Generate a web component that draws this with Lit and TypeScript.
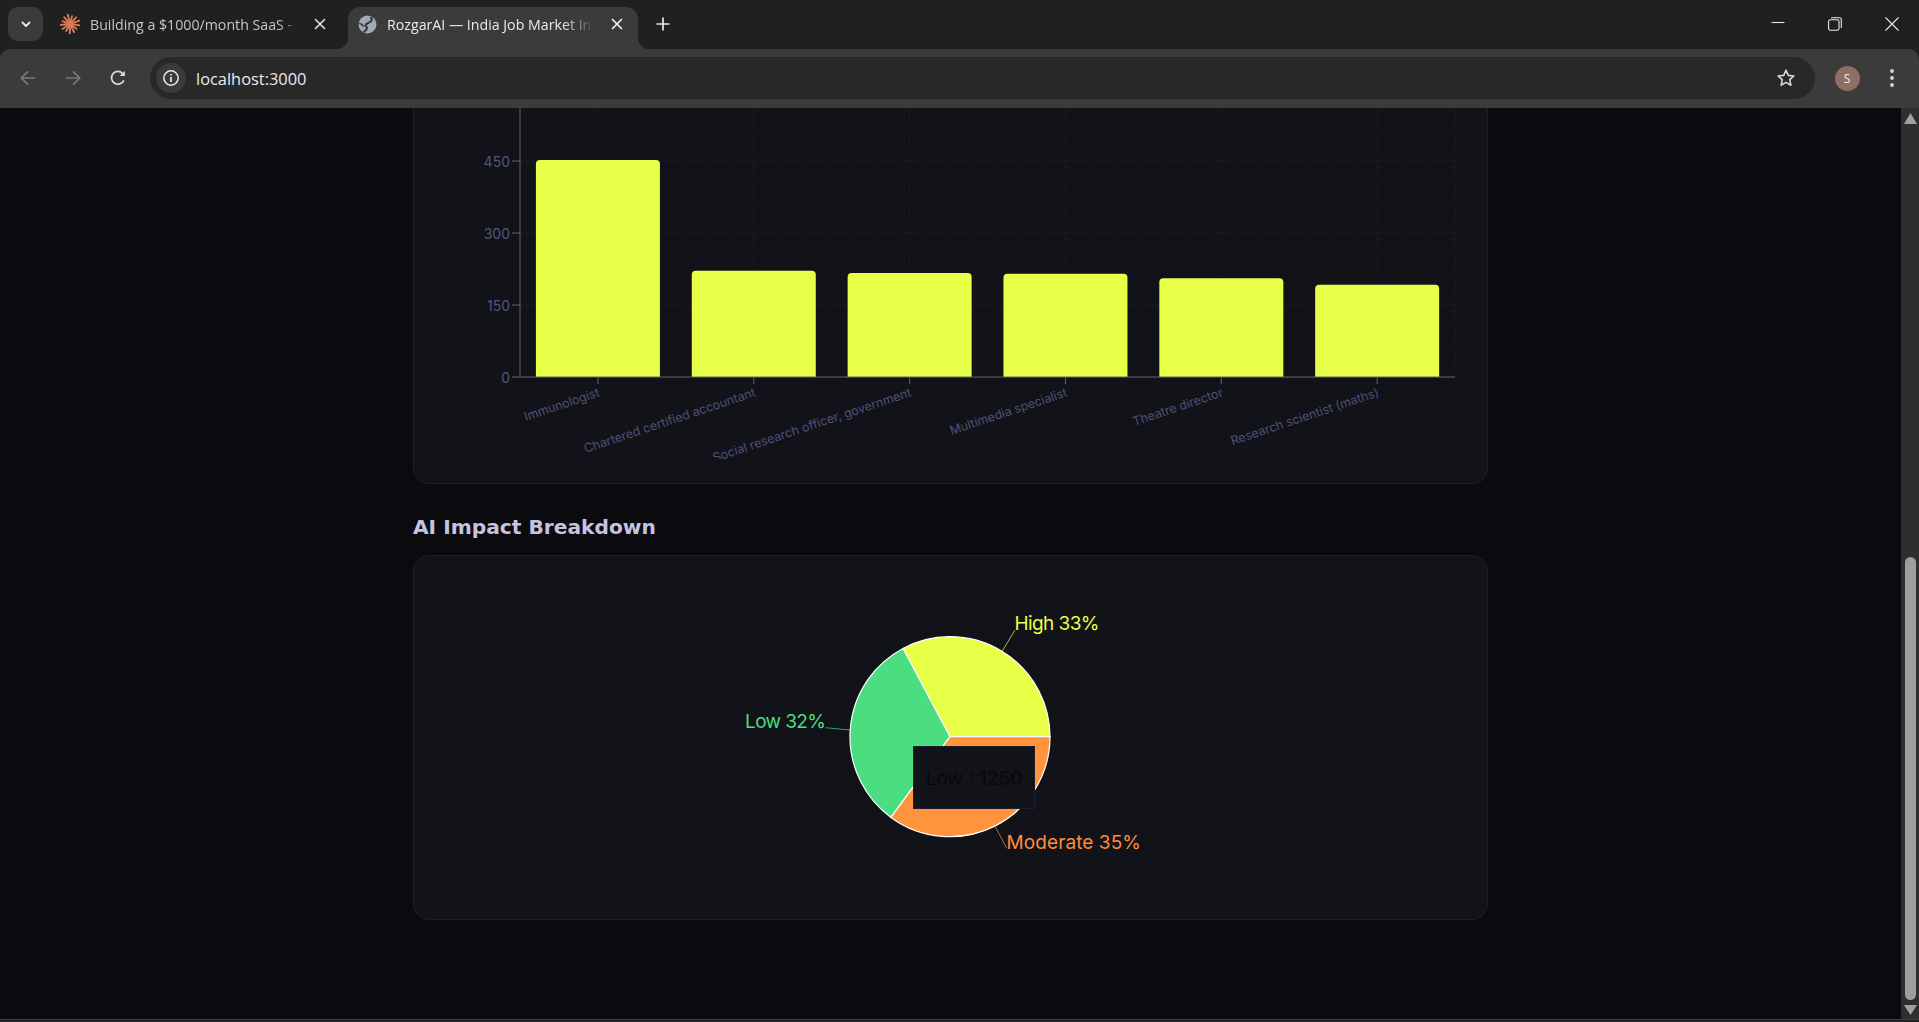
import { LitElement, html, css, svg } from 'lit';
import { customElement } from 'lit/decorators.js';

const YELLOW = '#e8ff47';
const GREEN = '#4ade80';
const ORANGE = '#ff943d';

const jobs = [
  { name: 'Immunologist', top: 160 },
  { name: 'Chartered certified accountant', top: 270.7 },
  { name: 'Social research officer, government', top: 273 },
  { name: 'Multimedia specialist', top: 273.7 },
  { name: 'Theatre director', top: 278.3 },
  { name: 'Research scientist (maths)', top: 284.7 },
];

const BASE_Y = 377;
const AXIS_X = 520;
const PITCH = 155.85;
const BAR_W = 124;

const yTicks = [
  { label: '450', y: 161 },
  { label: '300', y: 233 },
  { label: '150', y: 305 },
  { label: '0', y: BASE_Y },
];

const CX = 950;
const CY = 736.7;
const R = 100;

function slice(from: number, to: number) {
  const a = (from * Math.PI) / 180;
  const b = (to * Math.PI) / 180;
  const large = to - from > 180 ? 1 : 0;
  return `M${CX} ${CY} L${CX + R * Math.cos(a)} ${CY - R * Math.sin(a)} A${R} ${R} 0 ${large} 0 ${CX + R * Math.cos(b)} ${CY - R * Math.sin(b)} Z`;
}

const slices = [
  { from: 0, to: 118, color: YELLOW },
  { from: 118, to: 233.8, color: GREEN },
  { from: 233.8, to: 360, color: ORANGE },
];

const pieLabels = [
  { text: 'High 33%', x: 1014.5, y: 630, w: 85, anchor: 'start', color: YELLOW, line: '1002.3,651 1015,630' },
  { text: 'Low 32%', x: 826, y: 727.7, w: 81, anchor: 'end', color: GREEN, line: '850,730 825.3,727.7' },
  { text: 'Moderate 35%', x: 1006.5, y: 848.7, w: 134.5, anchor: 'start', color: '#ff8c3a', line: '995.3,826.7 1006.7,848.3' },
];

@customElement('browser-bar')
export class BrowserBar extends LitElement {
  static styles = css`
    :host {
      display: block;
      font-family: 'Open Sans', 'Liberation Sans', sans-serif;
      background: #1f2120;
    }
    .strip {
      height: 49px;
      display: flex;
      align-items: flex-end;
      position: relative;
    }
    .menu {
      width: 35px;
      height: 34px;
      margin: 0 0 8px 8px;
      border-radius: 10px;
      background: #3b3b3b;
      display: flex;
      align-items: center;
      justify-content: center;
    }
    .tab {
      height: 42px;
      display: flex;
      align-items: center;
      font-size: 14.2px;
      position: relative;
      box-sizing: border-box;
      padding-bottom: 8px;
    }
    .tab.idle {
      width: 288px;
      margin-left: 5px;
      padding-left: 12px;
      color: #c4c7c5;
      margin-right: 12px;
    }
    .tab.on {
      width: 290px;
      padding-left: 10px;
      color: #e8eaed;
      background: #3b3b3b;
      border-radius: 12px 12px 0 0;
    }
    .tab.on::before,
    .tab.on::after {
      content: '';
      position: absolute;
      bottom: 0;
      width: 12px;
      height: 12px;
    }
    .tab.on::before {
      left: -12px;
      background: radial-gradient(circle at 0 0, transparent 12px, #3b3b3b 12.5px);
    }
    .tab.on::after {
      right: -12px;
      background: radial-gradient(circle at 100% 0, transparent 12px, #3b3b3b 12.5px);
    }
    .title {
      margin-left: 10px;
      white-space: nowrap;
    }
    .idle .title {
      -webkit-mask-image: linear-gradient(to right, #000 93%, rgba(0, 0, 0, 0.45) 100%);
      mask-image: linear-gradient(to right, #000 93%, rgba(0, 0, 0, 0.45) 100%);
    }
    .on .title {
      -webkit-mask-image: linear-gradient(to right, #000 86%, rgba(0, 0, 0, 0.1) 100%);
      mask-image: linear-gradient(to right, #000 86%, rgba(0, 0, 0, 0.1) 100%);
    }
    .close {
      width: 24px;
      height: 24px;
      margin-left: auto;
      display: flex;
      align-items: center;
      justify-content: center;
    }
    .idle .close {
      margin-right: 4px;
    }
    .on .close {
      margin-right: 9px;
    }
    .plus {
      margin: 0 0 8px 12px;
      width: 26px;
      height: 34px;
      display: flex;
      align-items: center;
      justify-content: center;
    }
    .winbtns {
      position: absolute;
      top: 0;
      right: 0;
      display: flex;
      padding-right: 4.5px;
      gap: 11px;
    }
    .winbtn {
      width: 46px;
      height: 47px;
      display: flex;
      align-items: center;
      justify-content: center;
    }
    .winbtn svg {
      display: block;
    }
    .toolbar {
      height: 59px;
      background: #3b3b3b;
      border-radius: 10px 10px 0 0;
      display: flex;
      align-items: center;
      box-sizing: border-box;
      padding: 0 15px 1px 10px;
    }
    .nav {
      width: 36px;
      height: 36px;
      margin-right: 9px;
      display: flex;
      align-items: center;
      justify-content: center;
    }
    .omni {
      height: 42px;
      flex: 1;
      margin-left: 5px;
      background: #282828;
      border-radius: 21px;
      display: flex;
      align-items: center;
      padding: 0 19px 0 6px;
      box-sizing: border-box;
    }
    .chip {
      width: 30px;
      height: 30px;
      border-radius: 50%;
      background: #3b3b3b;
      display: flex;
      align-items: center;
      justify-content: center;
    }
    .url {
      flex: 1;
      margin-left: 10px;
      font-size: 16.4px;
      color: #e8eaed;
    }
    .avatar {
      width: 25px;
      height: 25px;
      margin-left: 19.5px;
      border-radius: 50%;
      background: #8f6f63;
      color: #f4ece8;
      font-size: 12px;
      display: flex;
      align-items: center;
      justify-content: center;
    }
    .kebab {
      width: 24px;
      margin-left: 20.5px;
      display: flex;
      justify-content: center;
    }
  `;

  render() {
    const rays = Array.from({ length: 13 }, (_, i) => {
      const a = (i * 360) / 13 + 8;
      const len = i % 3 === 0 ? 10 : i % 3 === 1 ? 8 : 9;
      return svg`<line x1="10" y1="10" x2="${10 + len * Math.cos((a * Math.PI) / 180)}" y2="${10 + len * Math.sin((a * Math.PI) / 180)}"></line>`;
    });
    return html`
      <div class="strip">
        <div class="menu">
          <svg width="12" height="12" viewBox="0 0 12 12" fill="none" stroke="#e8eaed" stroke-width="1.8" stroke-linecap="round" stroke-linejoin="round"><path d="M2.5 4.5 6 8l3.5-3.5"></path></svg>
        </div>
        <div class="tab idle">
          <svg width="20" height="20" viewBox="0 0 20 20" stroke="#d97757" stroke-width="1.9" stroke-linecap="round" fill="#d97757">${rays}<circle cx="10" cy="10" r="3.4" stroke="none"></circle></svg>
          <span class="title">Building a $1000/month SaaS -</span>
          <span class="close"><svg width="12" height="12" viewBox="0 0 12 12" stroke="#dfe1e3" stroke-width="1.6" stroke-linecap="round"><path d="M1.5 1.5l9 9M10.5 1.5l-9 9"></path></svg></span>
        </div>
        <div class="tab on">
          <svg width="19" height="19" viewBox="0 0 19 19" fill="none"><circle cx="9.5" cy="9.5" r="9" fill="#a3a9b0"></circle><path d="M13 2.6c2.4 3.2-1 4.6-3.2 5.6-2 .9-3.2 2.2-1.6 3.4 1.6 1.2.6 3.4-2 5" stroke="#3b3b3b" stroke-width="2.2" stroke-linecap="round"></path><path d="M1.6 8.5c1.5.2 3 1.2 3.6 2.8" stroke="#3b3b3b" stroke-width="1.6" stroke-linecap="round"></path></svg>
          <span class="title">RozgarAI — India Job Market In</span>
          <span class="close"><svg width="12" height="12" viewBox="0 0 12 12" stroke="#f0f1f2" stroke-width="1.7" stroke-linecap="round"><path d="M1.5 1.5l9 9M10.5 1.5l-9 9"></path></svg></span>
        </div>
        <div class="plus">
          <svg width="14" height="14" viewBox="0 0 14 14" stroke="#e8eaed" stroke-width="1.7"><path d="M7 .5v13M.5 7h13"></path></svg>
        </div>
        <div class="winbtns">
          <div class="winbtn"><svg width="14" height="14" viewBox="0 0 14 14" stroke="#e8eaed" stroke-width="1.1"><path d="M0.5 5.5h13"></path></svg></div>
          <div class="winbtn"><svg width="14" height="14" viewBox="0 0 14 14" fill="none" stroke="#e8eaed" stroke-width="1.1"><rect x="0.6" y="2.8" width="10.4" height="10.4" rx="1.6"></rect><path d="M3 .7h8.5a1.8 1.8 0 0 1 1.8 1.8V11"></path></svg></div>
          <div class="winbtn"><svg width="14" height="14" viewBox="0 0 14 14" stroke="#e8eaed" stroke-width="1.1"><path d="M.5.5l13 13M13.5.5l-13 13"></path></svg></div>
        </div>
      </div>
      <div class="toolbar">
        <div class="nav"><svg width="18" height="18" viewBox="0 0 18 18" fill="none" stroke="#7a7a7a" stroke-width="1.7"><path d="M16 9H2.5M9 2.3 2.3 9 9 15.7"></path></svg></div>
        <div class="nav"><svg width="18" height="18" viewBox="0 0 18 18" fill="none" stroke="#7a7a7a" stroke-width="1.7"><path d="M2 9h13.5M9 2.3 15.7 9 9 15.7"></path></svg></div>
        <div class="nav"><svg width="18" height="18" viewBox="0 0 18 18" fill="none" stroke="#dcdcdc" stroke-width="1.7"><path d="M14.8 11.3A6.4 6.4 0 1 1 13.6 4.5L15.5 6.4"></path><path d="M15.8 1.8v5.2h-5.2" fill="#dcdcdc" stroke="none"></path></svg></div>
        <div class="omni">
          <div class="chip"><svg width="18" height="18" viewBox="0 0 18 18" fill="none" stroke="#e8eaed" stroke-width="1.5"><circle cx="9" cy="9" r="7.2"></circle><path d="M9 8v5M9 5v1.6" stroke-width="1.7"></path></svg></div>
          <span class="url">localhost:3000</span>
          <svg width="20" height="20" viewBox="0 0 20 20" fill="none" stroke="#d8d8d8" stroke-width="1.6" stroke-linejoin="round"><path d="M10 2.2l2.3 5.2 5.6.6-4.2 3.7 1.2 5.5L10 14.4l-4.9 2.8 1.2-5.5L2.1 8l5.6-.6z"></path></svg>
        </div>
        <div class="avatar">S</div>
        <div class="kebab"><svg width="6" height="20" viewBox="0 0 6 20" fill="#d8d8d8"><circle cx="3" cy="3" r="1.9"></circle><circle cx="3" cy="10" r="1.9"></circle><circle cx="3" cy="17" r="1.9"></circle></svg></div>
      </div>
    `;
  }
}

@customElement('app-root')
export class AppRoot extends LitElement {
  static styles = css`
    :host {
      display: flex;
      flex-direction: column;
      height: 1022px;
      overflow: hidden;
      background: #0a0a0f;
    }
    .page {
      flex: 1;
      display: flex;
      min-height: 0;
    }
    .scroll {
      flex: 1;
      overflow: hidden;
    }
    .content {
      width: 1075px;
      margin: 0 auto;
      font-family: 'Inter', 'Noto Sans', sans-serif;
    }
    .card {
      background: #111318;
      border: 1px solid #1e1e2e;
      border-radius: 16px;
      box-sizing: border-box;
    }
    .card.bars {
      height: 376px;
      border-top: none;
      border-radius: 0 0 16px 16px;
    }
    .card.pie {
      height: 365px;
      position: relative;
    }
    svg.chart {
      display: block;
    }
    h2 {
      margin: 31px 0 15px;
      font-family: 'DejaVu Sans', sans-serif;
      font-size: 20.2px;
      line-height: 25px;
      font-weight: 600;
      color: #c4c4e0;
    }
    .tick {
      fill: #555578;
      font-size: 14px;
    }
    .xtick {
      fill: #50507a;
      font-size: 12.4px;
    }
    .pielabel {
      font-size: 19px;
    }
    .tip {
      position: absolute;
      left: 499px;
      top: 190px;
      width: 122px;
      height: 63px;
      box-sizing: border-box;
      padding-top: 2px;
      background: #111318;
      border: 1px solid #1e1e2e;
      color: #08080c;
      font-size: 19px;
      display: flex;
      align-items: center;
      justify-content: center;
    }
    .scrollbar {
      width: 18px;
      background: #2e2e2e;
      display: flex;
      flex-direction: column;
      align-items: center;
      padding: 5px 0 4px;
      box-sizing: border-box;
    }
    .track {
      flex: 1;
      width: 11px;
      display: flex;
      flex-direction: column;
      justify-content: flex-end;
      padding: 0 0 5px;
    }
    .thumb {
      height: 443px;
      background: #9e9e9e;
      border-radius: 6px;
    }
    .taskbar {
      height: 2px;
      background: #1c2228;
      border-top: 1px solid #3a4048;
    }
  `;

  renderBars() {
    const right = AXIS_X + PITCH * 6;
    const xs = jobs.map((_, i) => AXIS_X + PITCH * (i + 0.5));
    return svg`
      <g stroke="#1e1e2e" stroke-dasharray="3 3" fill="none">
        ${yTicks.slice(0, 3).map((t) => svg`<line x1="${AXIS_X}" x2="${right}" y1="${t.y}" y2="${t.y}"></line>`)}
        ${xs.map((x) => svg`<line x1="${x}" x2="${x}" y1="100" y2="${BASE_Y}"></line>`)}
        <line x1="${right}" x2="${right}" y1="100" y2="${BASE_Y}"></line>
      </g>
      ${jobs.map((j, i) => {
        const x = xs[i] - BAR_W / 2;
        const r = 4;
        return svg`<path fill="${YELLOW}" d="M${x} ${BASE_Y}V${j.top + r}a${r} ${r} 0 0 1 ${r} ${-r}H${x + BAR_W - r}a${r} ${r} 0 0 1 ${r} ${r}V${BASE_Y}Z"></path>`;
      })}
      <g stroke="#666" fill="none">
        <line x1="${AXIS_X}" x2="${AXIS_X}" y1="100" y2="${BASE_Y}"></line>
        <line x1="${AXIS_X}" x2="${right}" y1="${BASE_Y}" y2="${BASE_Y}"></line>
        ${yTicks.map((t) => svg`<line x1="${AXIS_X - 8}" x2="${AXIS_X}" y1="${t.y}" y2="${t.y}"></line>`)}
        ${xs.map((x) => svg`<line x1="${x}" x2="${x}" y1="${BASE_Y}" y2="${BASE_Y + 7}"></line>`)}
      </g>
      ${yTicks.map((t) => svg`<text class="tick" x="${AXIS_X - 10}" y="${t.y + 6}" text-anchor="end">${t.label}</text>`)}
      ${jobs.map((j, i) => svg`<text class="xtick" text-anchor="end" transform="translate(${xs[i] + 2.5} 396) rotate(-18.5)">${j.name}</text>`)}
    `;
  }

  renderPie() {
    return svg`
      ${pieLabels.map((l) => svg`<polyline points="${l.line}" fill="none" stroke="${l.color}" stroke-opacity="0.7"></polyline>`)}
      ${slices.map((s) => svg`<path d="${slice(s.from, s.to)}" fill="${s.color}" stroke="#fff" stroke-width="1.2"></path>`)}
      ${pieLabels.map((l) => svg`<text class="pielabel" x="${l.x}" y="${l.y}" text-anchor="${l.anchor}" textLength="${l.w}" fill="${l.color}">${l.text}</text>`)}
    `;
  }

  render() {
    return html`
      <browser-bar></browser-bar>
      <div class="page">
        <div class="scroll">
          <div class="content">
            <div class="card bars">
              <svg class="chart" width="1073" height="351" viewBox="414 108 1073 351">${this.renderBars()}</svg>
            </div>
            <h2>AI Impact Breakdown</h2>
            <div class="card pie">
              <svg class="chart" width="1073" height="363" viewBox="414 556 1073 363">${this.renderPie()}</svg>
              <div class="tip">Low : 1250</div>
            </div>
          </div>
        </div>
        <div class="scrollbar">
          <svg width="13" height="11" viewBox="0 0 13 11" fill="#a0a0a0"><path d="M6.5 0 13 11H0z"></path></svg>
          <div class="track"><div class="thumb"></div></div>
          <svg width="13" height="10" viewBox="0 0 13 10" fill="#a0a0a0"><path d="M0 0h13L6.5 10z"></path></svg>
        </div>
      </div>
      <div class="taskbar"></div>
    `;
  }
}
